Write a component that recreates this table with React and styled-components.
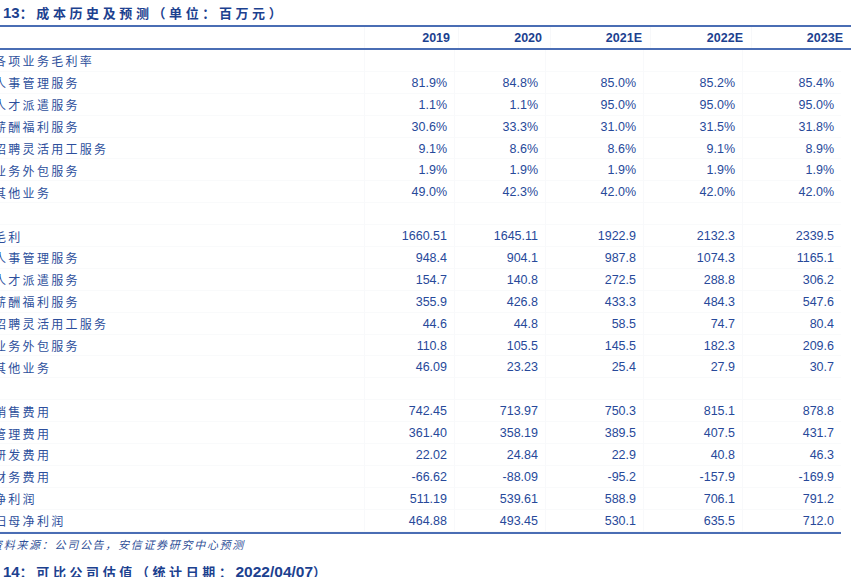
import React from "react";
import styled, { createGlobalStyle } from "styled-components";

const Global = createGlobalStyle`
  html, body { margin: 0; padding: 0; background: #fff; }
  body { overflow: hidden; }
`;

const BLUE = "#1c418f";
const NUM = "#27499a";
const LINE = "#4a6db4";
const LATIN = `"Liberation Sans", Arial, "Noto Sans CJK SC", sans-serif`;
const CJK = `"Noto Sans CJK SC", "Liberation Sans", sans-serif`;

const Page = styled.div`
  width: 862px;
  height: 577px;
  overflow: hidden;
  background: #fff;
`;

const Title = styled.div`
  display: flex;
  align-items: center;
  height: ${(p) => p.$h || 25}px;
  margin-top: ${(p) => p.$mt || 0}px;
  padding-left: 3px;
  color: ${BLUE};
  font-weight: 700;
  white-space: nowrap;
`;

const TitleNum = styled.span`
  font-family: ${LATIN};
  font-size: 15px;
  font-weight: 700;
`;

const TitleCn = styled.span`
  font-family: ${CJK};
  font-size: 13px;
  font-weight: 700;
  letter-spacing: 3.6px;
`;

const TitleDate = styled.span`
  font-family: ${LATIN};
  font-size: 15.5px;
  font-weight: 700;
`;

const Table = styled.div`
  display: flex;
  flex-direction: column;
`;

const HeaderRow = styled.div`
  display: grid;
  grid-template-columns: 364px 94px 92px 100px 101px 100px;
  width: 851px;
  height: 21px;
  border-top: 2px solid ${LINE};
  border-bottom: 2px solid ${LINE};
`;

const HeadCell = styled.div`
  display: flex;
  align-items: center;
  justify-content: flex-end;
  padding-right: 8px;
  font-family: ${LATIN};
  font-size: 12.5px;
  font-weight: 700;
  color: ${BLUE};
  border-left: 1px solid #f7f8fa;
`;

const HeadLabel = styled.div``;

const Body = styled.div`
  width: 841px;
  border-bottom: 2px solid ${LINE};
`;

const Row = styled.div`
  display: grid;
  grid-template-columns: 364px 90px 91px 98px 99px 99px;
  height: 21.9px;
  box-shadow: inset 0 -1px 0 #f9fafb;
`;

const Label = styled.div`
  display: flex;
  align-items: center;
  margin-left: -6px;
  font-family: ${CJK};
  font-size: 12px;
  letter-spacing: 2.3px;
  color: #2d4f9c;
  white-space: nowrap;
`;

const Cell = styled.div`
  display: flex;
  align-items: center;
  justify-content: flex-end;
  padding-right: 7px;
  font-family: ${LATIN};
  font-size: 12.5px;
  color: ${NUM};
  border-left: 1px solid #f8f9fb;
`;

const Source = styled.div`
  padding-top: 2px;
  height: 16px;
  line-height: 16px;
  margin-left: -9px;
  font-family: ${CJK};
  font-size: 11px;
  font-style: italic;
  letter-spacing: 1.7px;
  color: #2f4f97;
  white-space: nowrap;
`;

const years = ["2019", "2020", "2021E", "2022E", "2023E"];

const rows = [
  ["各项业务毛利率"],
  ["人事管理服务", "81.9%", "84.8%", "85.0%", "85.2%", "85.4%"],
  ["人才派遣服务", "1.1%", "1.1%", "95.0%", "95.0%", "95.0%"],
  ["薪酬福利服务", "30.6%", "33.3%", "31.0%", "31.5%", "31.8%"],
  ["招聘灵活用工服务", "9.1%", "8.6%", "8.6%", "9.1%", "8.9%"],
  ["业务外包服务", "1.9%", "1.9%", "1.9%", "1.9%", "1.9%"],
  ["其他业务", "49.0%", "42.3%", "42.0%", "42.0%", "42.0%"],
  [""],
  ["毛利", "1660.51", "1645.11", "1922.9", "2132.3", "2339.5"],
  ["人事管理服务", "948.4", "904.1", "987.8", "1074.3", "1165.1"],
  ["人才派遣服务", "154.7", "140.8", "272.5", "288.8", "306.2"],
  ["薪酬福利服务", "355.9", "426.8", "433.3", "484.3", "547.6"],
  ["招聘灵活用工服务", "44.6", "44.8", "58.5", "74.7", "80.4"],
  ["业务外包服务", "110.8", "105.5", "145.5", "182.3", "209.6"],
  ["其他业务", "46.09", "23.23", "25.4", "27.9", "30.7"],
  [""],
  ["销售费用", "742.45", "713.97", "750.3", "815.1", "878.8"],
  ["管理费用", "361.40", "358.19", "389.5", "407.5", "431.7"],
  ["研发费用", "22.02", "24.84", "22.9", "40.8", "46.3"],
  ["财务费用", "-66.62", "-88.09", "-95.2", "-157.9", "-169.9"],
  ["净利润", "511.19", "539.61", "588.9", "706.1", "791.2"],
  ["归母净利润", "464.88", "493.45", "530.1", "635.5", "712.0"],
];

export default function App() {
  return (
    <Page>
      <Global />
      <Title $h={25}>
        <TitleNum>13</TitleNum>
        <TitleCn>：成本历史及预测（单位：百万元）</TitleCn>
      </Title>
      <Table>
        <HeaderRow>
          <HeadLabel />
          {years.map((y) => (
            <HeadCell key={y}>{y}</HeadCell>
          ))}
        </HeaderRow>
        <Body>
          {rows.map((r, i) => (
            <Row key={i}>
              <Label>{r[0]}</Label>
              {[1, 2, 3, 4, 5].map((k) => (
                <Cell key={k}>{r[k] || ""}</Cell>
              ))}
            </Row>
          ))}
        </Body>
      </Table>
      <Source>资料来源：公司公告，安信证券研究中心预测</Source>
      <Title $h={26} $mt={7}>
        <TitleNum>14</TitleNum>
        <TitleCn>：可比公司估值（统计日期：</TitleCn>
        <TitleDate>2022/04/07</TitleDate>
        <TitleCn>）</TitleCn>
      </Title>
    </Page>
  );
}
